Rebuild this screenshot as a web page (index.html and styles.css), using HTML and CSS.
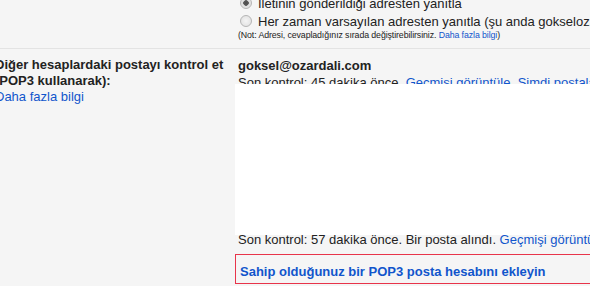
FILE: index.html
```html
<!DOCTYPE html>
<html lang="tr">

<head>
  <meta charset="UTF-8" />
  <meta name="viewport" content="width=device-width, initial-scale=1.0" />
  <title>Hesaplar ve İçe Aktarma</title>
  <link rel="stylesheet" href="styles.css">
</head>

<body>
  <div class="settings">
    <!-- yanıtlama seçenekleri -->
    <div class="row reply">
      <div class="label"></div>
      <div class="value">
        <label class="option"><input type="radio" name="reply" checked /> İletinin gönderildiği adresten yanıtla</label>
        <label class="option"><input type="radio" name="reply" /> Her zaman varsayılan adresten yanıtla (şu anda gokselozardali@gmail.com)</label>
        <p class="note">(Not: Adresi, cevapladığınız sırada değiştirebilirsiniz. <a href="#">Daha fazla bilgi</a>)</p>
      </div>
    </div>
    <!-- POP3 hesapları -->
    <div class="row pop">
      <div class="label">
        <b>Diğer hesaplardaki postayı kontrol et<br />(POP3 kullanarak):</b>
        <a href="#">Daha fazla bilgi</a>
      </div>
      <div class="value">
        <div class="account">goksel@ozardali.com</div>
        <div class="status">Son kontrol: 45 dakika önce. <a href="#">Geçmişi görüntüle</a>&nbsp; <a href="#">Şimdi postaları kontrol et</a></div>
        <div class="hidden-accounts"></div>
        <div class="status status-last">Son kontrol: 57 dakika önce. Bir posta alındı. <a href="#">Geçmişi görüntüle</a>&nbsp; <a href="#">Şimdi postaları kontrol et</a></div>
        <div class="add-account"><a href="#">Sahip olduğunuz bir POP3 posta hesabını ekleyin</a></div>
      </div>
    </div>
  </div>
</body>

</html>
```

FILE: styles.css
```css
* {
  box-sizing: border-box;
}

html,
body {
  margin: 0;
  background: #f5f5f5;
  overflow: hidden;
}

body {
  font-family: "Liberation Sans", Arial, sans-serif;
  font-size: 13px;
  color: #222;
}

a {
  color: #1155cc;
  text-decoration: none;
}

.settings {
  margin: -6px 0 0 -5px;
  white-space: nowrap;
}

.row {
  display: grid;
  grid-template-columns: 243px 1fr;
}

.reply {
  padding-bottom: 7px;
  border-bottom: 1px solid #e3e3e3;
}

.option {
  display: flex;
  align-items: center;
  height: 18px;
  padding-left: 2px;
}

.option input {
  appearance: none;
  width: 12px;
  height: 12px;
  margin: 0 6px 0 0;
  border-radius: 50%;
  border: 1px solid #b5b5b5;
  background: radial-gradient(circle, #f4f4f4 0, #dedede 100%);
}

.option input:checked {
  background: radial-gradient(circle, #4a4a4a 0, #5a5a5a 2.5px, #dcdcdc 3px, #ececec 100%);
}

.note {
  margin: 0;
  font-size: 8.8px;
  line-height: 11px;
  letter-spacing: -0.1px;
}

.pop {
  padding-top: 8px;
}

.pop .label {
  line-height: 16px;
}

.pop .label b,
.pop .label a {
  display: block;
}

.account {
  font-weight: bold;
  line-height: 17px;
}

.status {
  line-height: 17px;
}

.hidden-accounts {
  position: relative;
  margin: -7px 0 0 -3px;
  height: 151px;
  background: #fff;
}

.status-last {
  margin-top: -4px;
}

.add-account {
  margin: 6px 0 0 -3px;
  padding: 8px 0 3px 4px;
  line-height: 17px;
  font-weight: bold;
  border: 1px solid #e8344a;
  border-right: none;
}
```
